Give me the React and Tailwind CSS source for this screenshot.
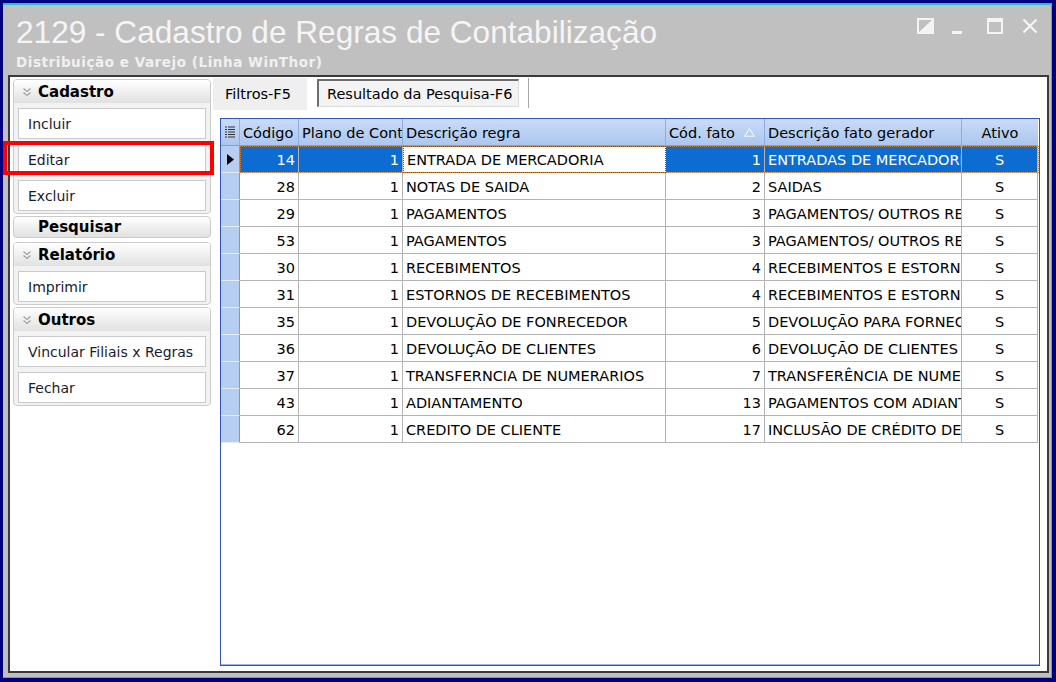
import React from 'react'

const rows = [
  ['14', '1', 'ENTRADA DE MERCADORIA', '1', 'ENTRADAS DE MERCADORIAS'],
  ['28', '1', 'NOTAS DE SAIDA', '2', 'SAIDAS'],
  ['29', '1', 'PAGAMENTOS', '3', 'PAGAMENTOS/ OUTROS RECEBIMENTOS'],
  ['53', '1', 'PAGAMENTOS', '3', 'PAGAMENTOS/ OUTROS RECEBIMENTOS'],
  ['30', '1', 'RECEBIMENTOS', '4', 'RECEBIMENTOS E ESTORNOS'],
  ['31', '1', 'ESTORNOS DE RECEBIMENTOS', '4', 'RECEBIMENTOS E ESTORNOS'],
  ['35', '1', 'DEVOLUÇÃO DE FONRECEDOR', '5', 'DEVOLUÇÃO PARA FORNECEDOR'],
  ['36', '1', 'DEVOLUÇÃO DE CLIENTES', '6', 'DEVOLUÇÃO DE CLIENTES'],
  ['37', '1', 'TRANSFERNCIA DE NUMERARIOS', '7', 'TRANSFERÊNCIA DE NUMERÁRIOS'],
  ['43', '1', 'ADIANTAMENTO', '13', 'PAGAMENTOS COM ADIANTAMENTO'],
  ['62', '1', 'CREDITO DE CLIENTE', '17', 'INCLUSÃO DE CRÉDITO DE CLIENTE'],
]

const Chevrons = () => (
  <svg width="10" height="10" viewBox="0 0 10 10" fill="none" stroke="#a3a3a3" strokeWidth="1.3">
    <path d="M1.5 1.5 L5 4.5 L8.5 1.5" />
    <path d="M1.5 5.5 L5 8.5 L8.5 5.5" />
  </svg>
)

const Item = ({ children }) => (
  <div className="h-[31px] bg-white border border-[#cacaca] flex items-center pl-[9px] pt-[2px] text-[14px] text-[#1b1b30] whitespace-nowrap">
    {children}
  </div>
)

const Group = ({ title, items, className = '' }) => (
  <div className={`border border-[#cbcbcb] rounded-[4px] bg-[#f2f2f2] ${className}`}>
    <div className="h-[23px] rounded-t-[3px] bg-gradient-to-b from-white to-[#e1e1e1] flex items-center pl-[8px]">
      <Chevrons />
      <span className="ml-[6px] pt-[1px] text-[15px] font-bold text-black">{title}</span>
    </div>
    <div className="flex flex-col gap-[5px] px-[4px] pt-[5px] pb-[2px]">
      {items.map(i => <Item key={i}>{i}</Item>)}
    </div>
  </div>
)

const cellBase = 'border-r border-b border-[#b3b3b3] flex items-center pt-[3px] overflow-hidden whitespace-nowrap'

const Row = ({ r, sel }) => {
  const blue = sel ? 'bg-[#0c6cd2] text-white' : 'text-black'
  return (
    <div className="relative grid grid-cols-[19px_59px_104px_263px_99px_197px_76px] h-[27px] text-[14.5px]">
      <div className="bg-[#b6cef2] border-r border-r-[#7a98d6] border-b border-b-[#e4ecfa] flex items-center justify-center">
        {sel && (
          <svg width="7" height="11" viewBox="0 0 7 11"><path d="M0 0 L7 5.5 L0 11 Z" fill="#000" /></svg>
        )}
      </div>
      <div className={`${cellBase} ${blue} justify-end pr-[3px]`}>{r[0]}</div>
      <div className={`${cellBase} ${blue} justify-end pr-[3px]`}>{r[1]}</div>
      {sel ? (
        <div className="border border-dotted border-[#555] bg-white text-black flex items-center pt-[2px] overflow-hidden whitespace-nowrap pl-[3px]">{r[2]}</div>
      ) : (
        <div className={`${cellBase} pl-[3px] text-black`}>{r[2]}</div>
      )}
      <div className={`${cellBase} ${blue} justify-end pr-[3px]`}>{r[3]}</div>
      <div className={`${cellBase} ${blue} pl-[3px]`}>{r[4]}</div>
      <div className={`${cellBase} ${blue} justify-center`}>S</div>
      {sel && (
        <div className="absolute left-[19px] right-0 top-0 bottom-0 border border-dotted border-[#c3803c] pointer-events-none" />
      )}
    </div>
  )
}

const hdr = 'bg-gradient-to-b from-[#cadcf6] to-[#abc6ef] border-r border-r-[#8faddf] border-b border-b-[#7f9fd8] flex items-center pt-[3px] overflow-hidden whitespace-nowrap text-black'

export default function App() {
  return (
    <div className="relative w-[1056px] h-[682px] bg-[#000080] pt-[3px] pl-[3px] pr-[4px] pb-[4px] font-['DejaVu_Sans',sans-serif] overflow-hidden">
      <div className="h-full flex flex-col bg-[#c0c0c0] border-t-2 border-r border-b border-[#33b9cc] pl-[5px] pr-[2px] pb-[4px]">
        {/* title bar */}
        <div className="h-[70px] shrink-0 flex justify-between pl-[8px] pt-[12px] pr-[11px]">
          <div>
            <div className="font-['Liberation_Sans',sans-serif] text-[31.6px] leading-[31px] text-[#f5f5f5]">
              2129 - Cadastro de Regras de Contabilização
            </div>
            <div className="mt-[6px] text-[13.5px] leading-[16px] tracking-[0.55px] font-bold text-[#f0f0f0]">
              Distribuição e Varejo (Linha WinThor)
            </div>
          </div>
          <div className="flex items-start pt-[1px]">
            <svg width="17" height="16" viewBox="0 0 17 16">
              <rect x="1" y="1" width="15" height="14" fill="none" stroke="#f4f4f4" strokeWidth="2" />
              <path d="M16 1 L16 15 L1 15 Z" fill="#f4f4f4" />
            </svg>
            <svg className="ml-[18px] mt-[13px]" width="10" height="3" viewBox="0 0 10 3">
              <rect x="0" y="0" width="10" height="3" fill="#f4f4f4" />
            </svg>
            <svg className="ml-[25px]" width="16" height="16" viewBox="0 0 16 16">
              <rect x="1" y="1" width="14" height="14" fill="none" stroke="#f4f4f4" strokeWidth="2" />
              <rect x="0" y="0" width="16" height="4" fill="#f4f4f4" />
            </svg>
            <svg className="ml-[19px]" width="16" height="16" viewBox="0 0 16 16" stroke="#f4f4f4" strokeWidth="2.4">
              <path d="M1.5 1.5 L14.5 14.5 M14.5 1.5 L1.5 14.5" />
            </svg>
          </div>
        </div>

        {/* content */}
        <div className="flex-1 bg-white border-2 border-[#3a3a3a] flex min-h-0">
          {/* left actions */}
          <div className="w-[198px] ml-[3px] mt-[2px] shrink-0">
            <Group title="Cadastro" items={['Incluir', 'Editar', 'Excluir']} />
            <div className="mt-[2px] h-[22px] border border-[#cbcbcb] rounded-[4px] bg-gradient-to-b from-white to-[#e1e1e1] flex items-center pl-[24px]">
              <span className="pt-[1px] text-[15px] font-bold text-black">Pesquisar</span>
            </div>
            <Group className="mt-[4px]" title="Relatório" items={['Imprimir']} />
            <Group className="mt-[2px]" title="Outros" items={['Vincular Filiais x Regras', 'Fechar']} />
          </div>

          {/* right */}
          <div className="flex-1 flex flex-col ml-[2px] pr-[7px] pb-[5px] min-w-0">
            <div className="h-[33px] shrink-0 flex items-start text-[14.5px] text-black">
              <div className="mt-[1px] h-[32px] w-[94px] bg-[#efefef] flex items-center pl-[12px] pt-[1px]">Filtros-F5</div>
              <div className="ml-[10px] mt-[2px] h-[28px] w-[202px] bg-[#f3f3f3] border-t-2 border-l-2 border-t-[#6e6e6e] border-l-[#6e6e6e] border-r border-b border-r-[#dcdcdc] border-b-[#dcdcdc] flex items-center pl-[8px] pt-[2px]">
                Resultado da Pesquisa-F6
              </div>
              <div className="ml-[9px] mt-[1px] w-px h-[30px] bg-[#a6a6a6]" />
            </div>

            <div className="mt-[8px] ml-[7px] flex-1 border border-[#2f55b8] bg-white shadow-[inset_0_-1px_0_#9fb5e6]">
              <div className="grid grid-cols-[19px_59px_104px_263px_99px_197px_76px] h-[27px] text-[14.5px]">
                <div className={`${hdr} justify-center !pt-0`}>
                  <svg width="10" height="12" viewBox="0 0 10 12" fill="#333">
                    <rect x="0" y="0.5" width="2" height="1" /><rect x="3" y="0.5" width="7" height="1" />
                    <rect x="0" y="3" width="2" height="1" /><rect x="3" y="3" width="7" height="1" />
                    <rect x="0" y="5.5" width="2" height="1" /><rect x="3" y="5.5" width="7" height="1" />
                    <rect x="0" y="8" width="2" height="1" /><rect x="3" y="8" width="7" height="1" />
                    <rect x="0" y="10.5" width="2" height="1" /><rect x="3" y="10.5" width="7" height="1" />
                  </svg>
                </div>
                <div className={`${hdr} pl-[3px]`}>Código</div>
                <div className={`${hdr} pl-[3px]`}>Plano de Contas</div>
                <div className={`${hdr} pl-[3px]`}>Descrição regra</div>
                <div className={`${hdr} pl-[3px] justify-between pr-[9px]`}>
                  <span className="w-[68px] overflow-hidden">Cód. fato gerador</span>
                  <svg className="-mt-[3px]" width="11" height="9" viewBox="0 0 11 9"><path d="M5.5 0.8 L10.2 8.3 L0.8 8.3 Z" fill="none" stroke="#eef3fc" strokeWidth="1.1" /></svg>
                </div>
                <div className={`${hdr} pl-[3px]`}>Descrição fato gerador</div>
                <div className={`${hdr} justify-center border-r-0`}>Ativo</div>
              </div>
              {rows.map((r, i) => <Row key={r[0]} r={r} sel={i === 0} />)}
            </div>
          </div>
        </div>
      </div>

      {/* highlight annotation */}
      <div className="absolute left-[3px] top-[141px] w-[211px] h-[34px] border-[4px] border-[#ff0000] pointer-events-none" />
    </div>
  )
}
